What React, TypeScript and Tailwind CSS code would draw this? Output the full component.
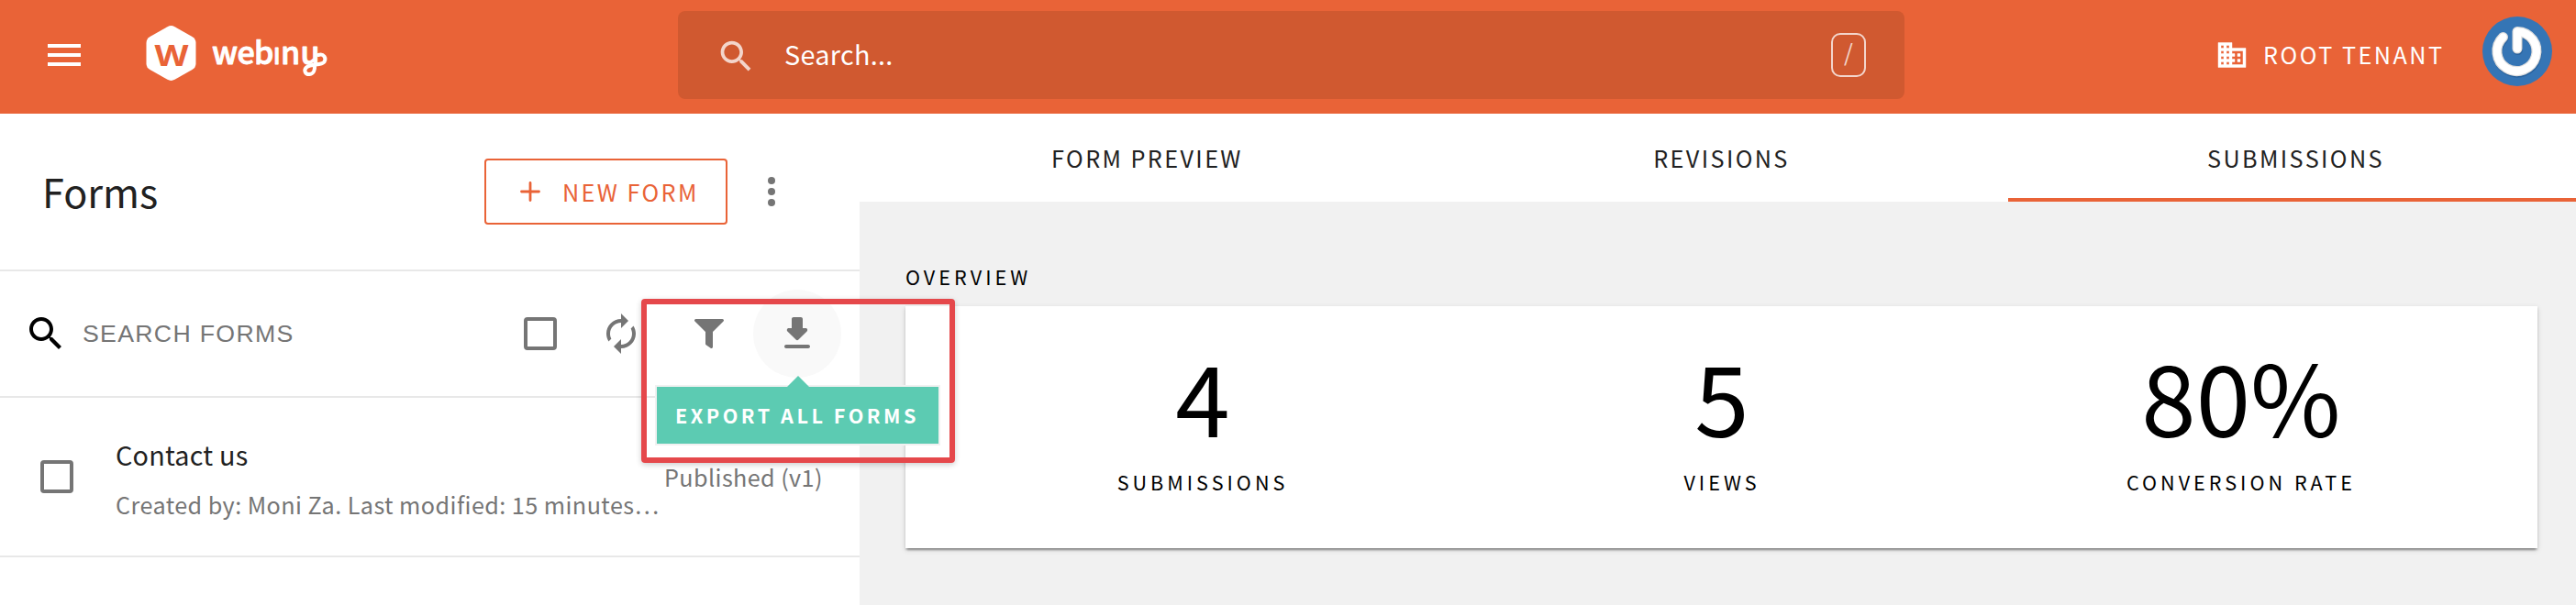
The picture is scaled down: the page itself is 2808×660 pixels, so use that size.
import React from "react";

const FONT = "font-['Noto_Sans_CJK_SC','Open_Sans',sans-serif]";

function Logo() {
  return (
    <svg width="200" height="64" viewBox="158 26 200 64" className="shrink-0" aria-label="webiny">
      <path
        d="M182.500 29.200 Q186.500 27 190.500 29.200 L209.500 39.900 Q213.500 42.200 213.500 46.800 V69.200 Q213.500 73.800 209.500 76.100 L190.500 86.800 Q186.500 89 182.500 86.800 L163.500 76.100 Q159.500 73.800 159.500 69.200 V46.800 Q159.500 42.200 163.500 39.900 Z"
        fill="#fff"
      />
      <text x="187" y="72" textAnchor="middle" textLength="37" lengthAdjust="spacingAndGlyphs" fontFamily="Open Sans, sans-serif" fontWeight="700" fontSize="33" fill="#e96337">
        W
      </text>
      <text
        y="69.500"
        x="231 258.500 277 297 306 327.500"
        fontFamily="Noto Sans CJK SC, sans-serif"
        fontWeight="500"
        fontSize="34"
        fill="#fff"
        stroke="#fff"
        strokeWidth="0.900"
        strokeLinejoin="round"
      >
        webınu
      </text>
      <path
        d="M347 60 C353 58 356 63.500 353.500 67.500 C350 72 339 69 334 73.500 C330.500 77 333 81.500 337.500 81 C342 80.500 343.500 76 343 71"
        fill="none"
        stroke="#fff"
        strokeWidth="4"
        strokeLinecap="round"
      />
    </svg>
  );
}

function Avatar() {
  return (
    <svg width="76" height="76" viewBox="0 0 76 76" className="shrink-0">
      <circle cx="38" cy="38" r="38" fill="#3575b5" />
      <g fill="none" strokeWidth="11" strokeLinecap="round" strokeLinejoin="round">
        <path d="M22.500 22.500 A21.500 21.500 0 1 0 38 16.500 V35" stroke="#1d4f85" opacity="0.500" transform="translate(0.500 1.500)" />
        <path d="M22.500 22.500 A21.500 21.500 0 1 0 38 16.500 V35" stroke="#dedede" />
        <path d="M22.500 22.500 A21.500 21.500 0 1 0 38 16.500 V35" stroke="#fff" strokeWidth="8.500" />
      </g>
    </svg>
  );
}

function Icon({ d, size = 48, className = "" }: { d: string; size?: number; className?: string }) {
  return (
    <svg width={size} height={size} viewBox="0 0 24 24" fill="currentColor" className={`shrink-0 ${className}`}>
      <path d={d} />
    </svg>
  );
}

const SEARCH =
  "M15.5 14h-.79l-.28-.27C15.41 12.59 16 11.110 16 9.500 16 5.910 13.090 3 9.500 3S3 5.910 3 9.500 5.910 16 9.500 16c1.610 0 3.090-.59 4.230-1.570l.27.28v.79l5 4.990L20.490 19l-4.990-5zm-6 0C7.010 14 5 11.990 5 9.500S7.010 5 9.500 5 14 7.010 14 9.500 11.990 14 9.500 14z";
const MENU = "M3 18h18v-2H3v2zm0-5h18v-2H3v2zm0-7v2h18V6H3z";
const DOMAIN =
  "M12 7V3H2v18h20V7H12zM6 19H4v-2h2v2zm0-4H4v-2h2v2zm0-4H4V9h2v2zm0-4H4V5h2v2zm4 12H8v-2h2v2zm0-4H8v-2h2v2zm0-4H8V9h2v2zm0-4H8V5h2v2zm10 12h-8v-2h2v-2h-2v-2h2v-2h-2V9h8v10zm-2-8h-2v2h2v-2zm0 4h-2v2h2v-2z";
const RENEW =
  "M12 6v3l4-4-4-4v3c-4.420 0-8 3.580-8 8 0 1.570.46 3.030 1.240 4.260L6.700 14.800c-.45-.83-.7-1.790-.7-2.800 0-3.310 2.690-6 6-6zm6.760 1.740L17.300 9.200c.44.84.7 1.790.7 2.800 0 3.310-2.690 6-6 6v-3l-4 4 4 4v-3c4.420 0 8-3.580 8-8 0-1.570-.46-3.030-1.240-4.260z";
const DOWNLOAD =
  "M16.590 9H15V4c0-.55-.45-1-1-1h-4c-.55 0-1 .45-1 1v5H7.410c-.89 0-1.340 1.080-.71 1.710l4.590 4.590c.39.39 1.020.39 1.410 0l4.590-4.590c.63-.63.19-1.710-.7-1.710zM5 19c0 .55.45 1 1 1h12c.55 0 1-.45 1-1s-.45-1-1-1H6c-.55 0-1 .45-1 1z";
const FILTER =
  "M487.976 0H24.028C2.710 0-8.047 25.866 7.058 40.971L192 225.941V432c0 7.831 3.821 15.170 10.237 19.662l80 55.980C298.020 518.690 320 507.493 320 487.980V225.941l184.947-184.970C520.021 25.896 509.338 0 487.976 0z";

function Checkbox() {
  return <span className="block h-9 w-9 shrink-0 rounded-[4px] border-4 border-[#757575]" />;
}

function Header() {
  return (
    <header className="flex h-[124px] shrink-0 bg-[#e96337] text-white">
      <div className="flex w-[739px] pt-9 pl-[46px]">
        <Icon d={MENU} />
        <div className="-mt-[10px] ml-16">
          <Logo />
        </div>
      </div>
      <div className="mt-3 flex h-24 w-[1337px] items-center rounded-lg bg-[#d05930] pr-[42px] pl-[41px]">
        <Icon d={SEARCH} size={45} className="mt-0.5 text-white/75" />
        <span className="mb-[2px] ml-[30px] flex-1 text-[28.8px] leading-[40px] tracking-[0.3px]">Search...</span>
        <span className="flex h-12 w-[38px] items-center justify-center rounded-[10px] border-2 border-white/75 pb-1.5 text-[25.200px] leading-none text-white/75">
          /
        </span>
      </div>
      <div className="flex flex-1 pl-[339px]">
        <svg width="36" height="36" viewBox="0 0 24 24" fill="currentColor" stroke="currentColor" strokeWidth="0.300" strokeLinejoin="round" className="mt-[42px] shrink-0">
          <path d={DOMAIN} />
        </svg>
        <span className="mt-[39px] ml-4 w-[239px] text-[25.200px] leading-[40px] tracking-[2.500px] whitespace-nowrap">ROOT TENANT</span>
        <div className="mt-[18px]">
          <Avatar />
        </div>
      </div>
    </header>
  );
}

function FormsPane() {
  return (
    <section className="flex w-[937px] shrink-0 flex-col bg-white text-[#212121]">
      <div className="flex h-[172px] items-center border-b-2 border-[#e8e8e8] pl-[46px]">
        <h1 className="mb-[3px] w-[482px] text-[43.200px] leading-[64px]">Forms</h1>
        <button className="flex h-[72px] w-[265px] items-center rounded-[4px] border-2 border-[#e96337] pl-[37px] text-[#e96337]">
          <svg width="22" height="22" viewBox="0 0 22 22" className="shrink-0">
            <path d="M11 1.500V20.500M1.500 11H20.500" stroke="currentColor" strokeWidth="2.800" strokeLinecap="round" />
          </svg>
          <span className="ml-6 text-[25.200px] leading-[40px] tracking-[2.400px] whitespace-nowrap">NEW FORM</span>
        </button>
        <svg width="10" height="34" viewBox="0 0 10 34" fill="#757575" className="ml-[43px]">
          <circle cx="5" cy="5" r="4" />
          <circle cx="5" cy="17" r="4" />
          <circle cx="5" cy="29" r="4" />
        </svg>
      </div>
      <div className="flex h-[138px] items-center border-b-2 border-[#e8e8e8] pl-[26px]">
        <Icon d={SEARCH} className="text-black" />
        <span className="ml-4 w-[481px] font-['Liberation_Sans',Arial,sans-serif] text-[26.700px] leading-[40px] tracking-[1.300px] text-[#757575]">
          SEARCH FORMS
        </span>
        <Checkbox />
        <Icon d={RENEW} className="ml-[46px] text-[#757575]" />
        <svg width="32" height="32" viewBox="0 0 512 512" fill="#757575" className="ml-14 shrink-0">
          <path d={FILTER} />
        </svg>
        <div className="relative ml-8 flex h-24 w-24 shrink-0 items-center justify-center rounded-full bg-[#f9f9f9]">
          <Icon d={DOWNLOAD} className="text-[#757575]" />
          <ExportTooltip />
        </div>
      </div>
      <div className="flex h-[174px] border-b-2 border-[#e8e8e8] pl-11">
        <div className="mt-[68px]">
          <Checkbox />
        </div>
        <div className="mt-[39px] ml-[46px] w-[598px]">
          <div className="text-[28.800px] leading-[46px] tracking-[0.200px]">Contact us</div>
          <div className="mt-[9px] text-[25.200px] leading-[44px] tracking-[0.430px] whitespace-nowrap text-[#757575]">
            Created by: Moni Za. Last modified: 15 minutes…
          </div>
        </div>
        <div className="mt-16 text-[25.200px] leading-[44px] tracking-[0.400px] whitespace-nowrap text-[#757575]">Published (v1)</div>
      </div>
    </section>
  );
}

function ExportTooltip() {
  return (
    <>
      <div className="absolute top-[104px] -left-[107px] z-10 flex h-[66px] w-[311px] items-center border-2 border-[#f1f1f1] bg-[#5ccbb2] pl-5">
        <span className="text-[21.600px] leading-[40px] font-bold tracking-[3.500px] whitespace-nowrap text-white">EXPORT ALL FORMS</span>
        <svg width="24" height="13" viewBox="0 0 24 13" className="absolute -top-3 left-[142px]">
          <path d="M0 13V12L12 0L24 12V13Z" fill="#5ccbb2" />
        </svg>
      </div>
      <div className="absolute top-[10px] -left-[122px] z-10 h-[179px] w-[342px] rounded-[4px] border-6 border-[#e5484b] shadow-[0_2px_6px_rgba(0,0,0,0.2)]" />
    </>
  );
}

function Stat({ value, label, className }: { value: string; label: string; className: string }) {
  return (
    <div className={`flex flex-col items-center ${className}`}>
      <div className="text-[107px] leading-[120px]">{value}</div>
      <div className="mt-[15px] text-[21.600px] leading-[40px] tracking-[4px] whitespace-nowrap">{label}</div>
    </div>
  );
}

function SubmissionsPane() {
  const tab = "flex h-24 items-center justify-center text-[25.2px] leading-[40px] tracking-[2.400px] text-[#212121]";
  return (
    <section className="flex flex-1 flex-col bg-[#f1f1f1] text-black">
      <div className="flex bg-white">
        <div className={`${tab} w-[627px]`}>FORM PREVIEW</div>
        <div className={`${tab} w-[625px]`}>REVISIONS</div>
        <div className={`${tab} relative w-[619px]`}>
          <span className="pl-2">SUBMISSIONS</span>
          <span className="absolute inset-x-0 bottom-0 h-1 bg-[#e96337]" />
        </div>
      </div>
      <div className="mt-[62px] ml-[50px] text-[21.600px] leading-[40px] tracking-[4px]">OVERVIEW</div>
      <div className="mt-3 ml-[50px] flex h-[264px] w-[1779px] bg-white pt-[37px] pl-[41px] shadow-[0_4px_2px_-2px_rgba(0,0,0,0.25),0_2px_2px_0_rgba(0,0,0,0.16),0_2px_6px_0_rgba(0,0,0,0.14)]">
        <Stat value="4" label="SUBMISSIONS" className="w-[566px]" />
        <Stat value="5" label="VIEWS" className="w-[566px]" />
        <Stat value="80%" label="CONVERSION RATE" className="w-[566px]" />
      </div>
    </section>
  );
}

export default function App() {
  return (
    <div className={`${FONT} flex h-[660px] w-[2808px] flex-col overflow-hidden bg-white`}>
      <Header />
      <main className="flex flex-1">
        <FormsPane />
        <SubmissionsPane />
      </main>
    </div>
  );
}
